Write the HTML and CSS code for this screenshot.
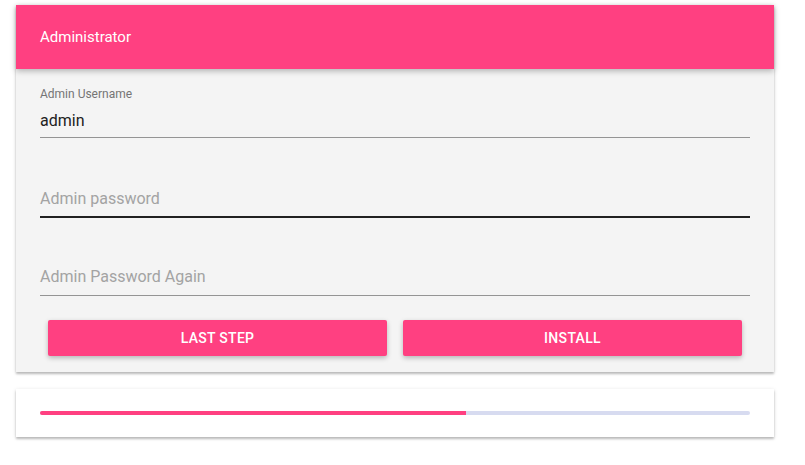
FILE: index.html
```html
<!DOCTYPE html>
<html lang="en">
<head>
<meta charset="utf-8">
<title>Administrator</title>
<link rel="stylesheet" href="styles.css">
</head>
<body>
<main class="page">
  <section class="card">
    <header class="card-header">Administrator</header>
    <div class="card-body">
      <div class="field">
        <label class="field-label">Admin Username</label>
        <div class="field-input">admin</div>
      </div>
      <div class="field focused">
        <label class="field-label"></label>
        <div class="field-input placeholder">Admin password</div>
      </div>
      <div class="field last">
        <label class="field-label"></label>
        <div class="field-input placeholder">Admin Password Again</div>
      </div>
      <div class="actions">
        <button class="btn">Last Step</button>
        <button class="btn">Install</button>
      </div>
    </div>
  </section>
  <section class="card progress-card">
    <div class="progress">
      <div class="progress-fill" style="width: 60%"></div>
    </div>
  </section>
</main>
</body>
</html>
```
FILE: styles.css
```css
* { box-sizing: border-box; }
html, body { margin: 0; padding: 0; background: #ffffff; }
body {
  font-family: Roboto, "Liberation Sans", Arial, sans-serif;
}
.page {
  padding: 5px 31px 20px 16px;
  display: flex;
  flex-direction: column;
  gap: 17px;
}
.card {
  background: #f4f4f4;
  box-shadow: 0 2px 2px rgba(0,0,0,0.2), 0 1px 4px rgba(0,0,0,0.14);
}
.card-header {
  height: 64px;
  line-height: 64px;
  padding: 0 24px;
  background: #ff4081;
  color: #ffffff;
  font-size: 15px;
  box-shadow: 0 2px 6px rgba(0,0,0,0.28);
  position: relative;
}
.card-body {
  padding: 8px 24px 16px;
  display: flex;
  flex-direction: column;
}
.field {
  padding-top: 10px;
  border-bottom: 1px solid #949494;
  margin-bottom: 17px;
}
.field.focused {
  border-bottom: 2px solid #212121;
  margin-bottom: 15px;
}
.field.focused .field-input { padding-bottom: 7px; }
.field.last .field-input { padding-bottom: 8px; }
.field-label {
  display: block;
  height: 15px;
  line-height: 15px;
  font-size: 12px;
  color: #757575;
}
.field-input {
  margin-top: 9px;
  line-height: 20px;
  font-size: 16px;
  color: #212121;
  padding-bottom: 6px;
}
.field-input.placeholder { color: #a3a3a3; }
.actions {
  display: flex;
  gap: 16px;
  padding: 7px 8px 0;
}
.btn {
  flex: 1;
  height: 36px;
  border: none;
  border-radius: 2px;
  background: #ff4081;
  color: #ffffff;
  font-family: Roboto, "Liberation Sans", Arial, sans-serif;
  font-size: 14px;
  font-weight: 500;
  text-transform: uppercase;
  letter-spacing: 0.3px;
  box-shadow: 0 2px 5px rgba(0,0,0,0.26);
}
.progress-card {
  background: #ffffff;
  padding: 22px 24px;
}
.progress {
  height: 4px;
  background: #d7dbf0;
  border-radius: 2px;
  overflow: hidden;
}
.progress-fill {
  height: 100%;
  background: #ff4081;
}
```
